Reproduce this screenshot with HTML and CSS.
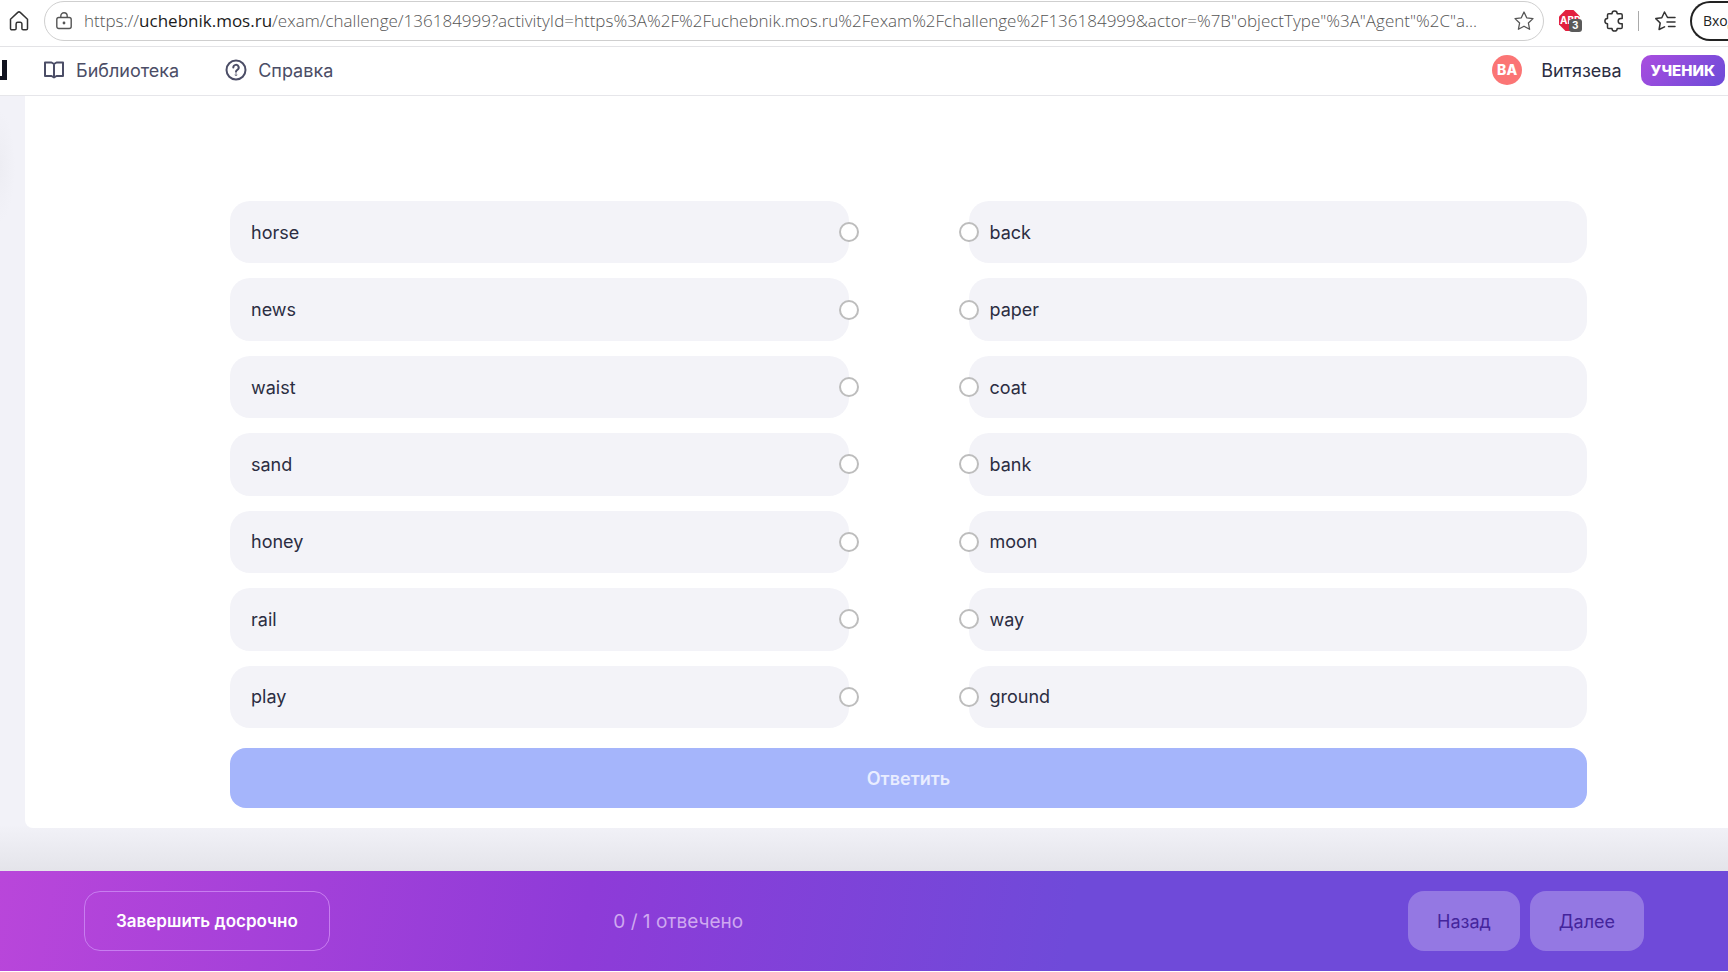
FILE: index.html
```html
<!DOCTYPE html>
<html lang="ru">
<head>
    <meta charset="UTF-8">
    <meta name="viewport" content="width=device-width, initial-scale=1.0">
    <title>Библиотека</title>
    <link rel="stylesheet" href="styles.css">
</head>
<body>
    <div class="toolbar">
        <button class="icon-btn" aria-label="Домой">
            <svg width="20" height="22" viewBox="0 0 20 22" fill="none" stroke="#333" stroke-width="1.5" stroke-linejoin="round" stroke-linecap="round"><path d="M1.5 9.2 8.8 2.4a1.8 1.8 0 0 1 2.4 0l7.3 6.8v9.3a1.3 1.3 0 0 1-1.3 1.3h-3a1.3 1.3 0 0 1-1.3-1.3v-4.6a1.7 1.7 0 0 0-1.7-1.7H8.8a1.7 1.7 0 0 0-1.7 1.7v4.6a1.3 1.3 0 0 1-1.3 1.3h-3a1.3 1.3 0 0 1-1.3-1.3z"/></svg>
        </button>
        <div class="address">
            <svg width="16" height="18" viewBox="0 0 16 18" fill="none" stroke="#555" stroke-width="1.4"><rect x=".8" y="5.5" width="14.4" height="11" rx="2"/><path d="M4.8 5.5V4a3.2 3.2 0 0 1 6.4 0v1.5"/><circle cx="8" cy="11" r=".7" fill="#555"/></svg>
            <p class="url">https://<b>uchebnik.mos.ru</b>/exam/challenge/136184999?activityId=https%3A%2F%2Fuchebnik.mos.ru%2Fexam%2Fchallenge%2F136184999&amp;actor=%7B"objectType"%3A"Agent"%2C"a...</p>
            <button class="icon-btn" aria-label="В избранное">
                <svg width="20" height="20" viewBox="0 0 20 20" fill="none" stroke="#555" stroke-width="1.3" stroke-linejoin="round"><path d="m10 1 2.7 5.8 6.3.8-4.6 4.4 1.2 6.3-5.6-3.1-5.6 3.1 1.2-6.3L1 7.6l6.3-.8z"/></svg>
            </button>
        </div>
        <div class="extensions">
            <button class="icon-btn" aria-label="ABP">
                <svg width="24" height="24" viewBox="0 0 24 24"><path d="M6.5 1h8L21 7.5v8L14.5 22h-8L0 15.5v-8z" fill="#e2203f"/><text x="1" y="15" class="abp-text">ABP</text><rect x="10" y="10" width="13" height="13" rx="3" fill="#5a5a5a"/><text x="13" y="20" class="abp-text">3</text></svg>
            </button>
            <button class="icon-btn" aria-label="Расширения">
                <svg width="20" height="22" viewBox="0 0 20 22" fill="none" stroke="#333" stroke-width="1.5" stroke-linejoin="round"><path d="M3.5 5a1.3 1.3 0 0 1 1.3-1.3H8a2.6 2.6 0 0 1 5.2 0h3.7A1.3 1.3 0 0 1 18.2 5v3.5h-1.4a2.6 2.6 0 0 0 0 5.2h1.4v3.5a1.3 1.3 0 0 1-1.3 1.3h-3.7a2.6 2.6 0 0 1-5.2 0H4.8a1.3 1.3 0 0 1-1.3-1.3v-3.5a2.6 2.6 0 0 1 0-5.2z"/></svg>
            </button>
            <span class="divider"></span>
            <button class="icon-btn" aria-label="Избранное">
                <svg width="21" height="20" viewBox="0 0 21 20" fill="none" stroke="#333" stroke-width="1.5" stroke-linejoin="round" stroke-linecap="round"><path d="M12.5 6.5 9.5 1 6.8 6.8l-6 .8L5.2 12l-1.1 6.5 5.4-2.6M13 6.5h7M12 11h8M13.5 15.5H20"/></svg>
            </button>
            <button class="login">Вход</button>
        </div>
    </div>

    <header class="header">
        <span class="logo"></span>
        <nav class="nav">
            <a href="#">
                <svg width="22" height="20" viewBox="0 0 22 20" fill="none" stroke="#4b4d66" stroke-width="2" stroke-linejoin="round"><path d="M2 2.5h6.5L11 4l2.5-1.5H20V16h-6.5L11 17.5 8.5 16H2zM11 4v13.5"/></svg>
                Библиотека
            </a>
            <a href="#">
                <svg width="22" height="22" viewBox="0 0 22 22" fill="none" stroke="#4b4d66" stroke-width="2" stroke-linecap="round"><circle cx="11" cy="11" r="9.5"/><path d="M8.3 8.5a2.7 2.7 0 1 1 4 2.4c-.9.5-1.3 1-1.3 1.8"/><circle cx="11" cy="15.8" r=".3"/></svg>
                Справка
            </a>
        </nav>
        <div class="user">
            <span class="avatar">ВА</span>
            <span class="user-name">Витязева</span>
            <span class="role">УЧЕНИК</span>
        </div>
    </header>

    <main class="main">
        <form class="panel">
            <div class="pairs">
                <fieldset class="column left">
                    <label class="item">horse<input type="radio" name="left"></label>
                    <label class="item">news<input type="radio" name="left"></label>
                    <label class="item">waist<input type="radio" name="left"></label>
                    <label class="item">sand<input type="radio" name="left"></label>
                    <label class="item">honey<input type="radio" name="left"></label>
                    <label class="item">rail<input type="radio" name="left"></label>
                    <label class="item">play<input type="radio" name="left"></label>
                </fieldset>
                <fieldset class="column right">
                    <label class="item">back<input type="radio" name="right"></label>
                    <label class="item">paper<input type="radio" name="right"></label>
                    <label class="item">coat<input type="radio" name="right"></label>
                    <label class="item">bank<input type="radio" name="right"></label>
                    <label class="item">moon<input type="radio" name="right"></label>
                    <label class="item">way<input type="radio" name="right"></label>
                    <label class="item">ground<input type="radio" name="right"></label>
                </fieldset>
            </div>
            <button class="answer" type="submit" disabled>Ответить</button>
        </form>
    </main>

    <footer class="footer">
        <button class="finish">Завершить досрочно</button>
        <div class="progress">
            <span class="counter">0 / 1 отвечено</span>
            <div class="pager">
                <button disabled>Назад</button>
                <button disabled>Далее</button>
            </div>
        </div>
    </footer>
</body>
</html>
```
FILE: styles.css
```css
* {
    box-sizing: border-box;
}
body {
    margin: 0;
    font-family: Inter, "Liberation Sans", sans-serif;
    font-size: 18px;
    color: #2b2d42;
    background: #fff;
    overflow: hidden;
}
button {
    font: inherit;
    cursor: pointer;
}
svg {
    display: block;
    flex-shrink: 0;
}

/* browser toolbar */
.toolbar {
    display: flex;
    align-items: center;
    height: 47px;
    padding: 0 0 5px 9px;
    border-bottom: 1px solid #e3e3e6;
}
.icon-btn {
    padding: 0;
    border: none;
    background: none;
}
.address {
    flex: 1;
    min-width: 0;
    display: flex;
    align-items: center;
    height: 40px;
    margin-left: 15px;
    padding: 0 9px 0 11px;
    border: 1px solid #cfcfcf;
    border-radius: 20px;
}
.url {
    flex: 1;
    min-width: 0;
    margin: 0 0 0 12px;
    overflow: hidden;
    white-space: nowrap;
    font-family: "Open Sans", "Noto Sans", sans-serif;
    font-size: 17px;
    font-weight: 350;
    color: #555;
}
.url b {
    font-weight: 400;
    color: #1b1b1b;
}
.extensions {
    display: flex;
    align-items: center;
    margin-left: 15px;
}
.extensions .icon-btn + .icon-btn {
    margin-left: 21px;
}
.abp-text {
    font: 700 10px Inter, sans-serif;
    fill: #fff;
}
.divider {
    width: 1px;
    height: 20px;
    margin: 0 16px 0 14px;
    background: #aaa;
}
.login {
    width: 38px;
    height: 40px;
    margin-left: 14px;
    padding: 0 0 0 11px;
    overflow: hidden;
    white-space: nowrap;
    text-align: left;
    border: 2px solid #222;
    border-right: none;
    border-radius: 20px 0 0 20px;
    background: #fff;
    color: #222;
    font-family: "Open Sans", "Noto Sans", sans-serif;
    font-size: 14px;
}

/* site header */
.header {
    display: flex;
    align-items: center;
    height: 49px;
    padding: 0 3px 2px 0;
    border-bottom: 1px solid #e6e6ea;
}
.logo {
    width: 7px;
    height: 20px;
    border: solid #11131f;
    border-width: 0 5px 4px 0;
}
.nav {
    display: flex;
    gap: 46px;
    margin-left: 36px;
}
.nav a {
    display: flex;
    align-items: center;
    gap: 11px;
    color: #4b4d66;
    text-decoration: none;
}
.user {
    display: flex;
    align-items: center;
    gap: 19px;
    margin-left: auto;
}
.avatar {
    width: 30px;
    border-radius: 50%;
    background: #fb7575;
    color: #fff;
    font-size: 14px;
    font-weight: 800;
    line-height: 30px;
    text-align: center;
}
.role {
    padding: 0 10px;
    border-radius: 10px;
    background: linear-gradient(135deg, #a94ddf, #6c4bd8);
    color: #fff;
    font-size: 15px;
    font-weight: 800;
    line-height: 31px;
}

/* exercise */
.main {
    padding: 0 0 43px 25px;
    background: radial-gradient(15px 55px at 0 70px, #ededf3, transparent), linear-gradient(#f2f2f8, #f2f2f8 94%, #e4e4ea);
}
.panel {
    padding: 105px 141px 20px 205px;
    border-radius: 0 0 0 8px;
    background: #fff;
}
.pairs {
    display: grid;
    grid-template-columns: 1fr 1fr;
    gap: 120px;
    min-height: 527px;
}
.column {
    display: grid;
    grid-auto-rows: 1fr;
    gap: 15px;
    min-width: 0;
    margin: 0;
    padding: 0;
    border: none;
}
.item {
    display: flex;
    align-items: center;
    justify-content: space-between;
    padding-left: 21px;
    border-radius: 20px;
    background: #f3f3f8;
}
.item input {
    appearance: none;
    width: 20px;
    height: 20px;
    margin: 0 -10px 0 0;
    border: 2px solid #bdbdbd;
    border-radius: 50%;
    background: #fff;
}
.right .item {
    flex-direction: row-reverse;
    justify-content: flex-end;
    gap: 11px;
    padding-left: 0;
}
.right .item input {
    margin: 0 0 0 -10px;
}
.answer {
    width: 100%;
    height: 60px;
    margin-top: 20px;
    border: none;
    border-radius: 16px;
    background: #a5b5fb;
    color: #e9edff;
    font-weight: 600;
}

/* bottom bar */
.footer {
    display: grid;
    grid-template-columns: 1fr 2fr;
    gap: 14px;
    align-items: center;
    height: 100px;
    padding: 0 84px;
    background: linear-gradient(100deg, #b946da, #8e3bd8 34%, #6f4ad9 62%, #6f4ad9);
}
.finish {
    justify-self: start;
    height: 60px;
    padding: 0 31px;
    border: 1px solid #c87df0;
    border-radius: 16px;
    background: none;
    color: #fff;
    font-size: 17px;
    font-weight: 600;
}
.progress {
    display: flex;
    align-items: center;
    justify-content: space-between;
}
.counter {
    color: #cfa9f0;
    font-size: 19px;
}
.pager {
    display: flex;
    gap: 10px;
}
.pager button {
    height: 60px;
    padding: 0 29px;
    border: none;
    border-radius: 16px;
    background: #9478e3;
    color: #44259c;
}
```
